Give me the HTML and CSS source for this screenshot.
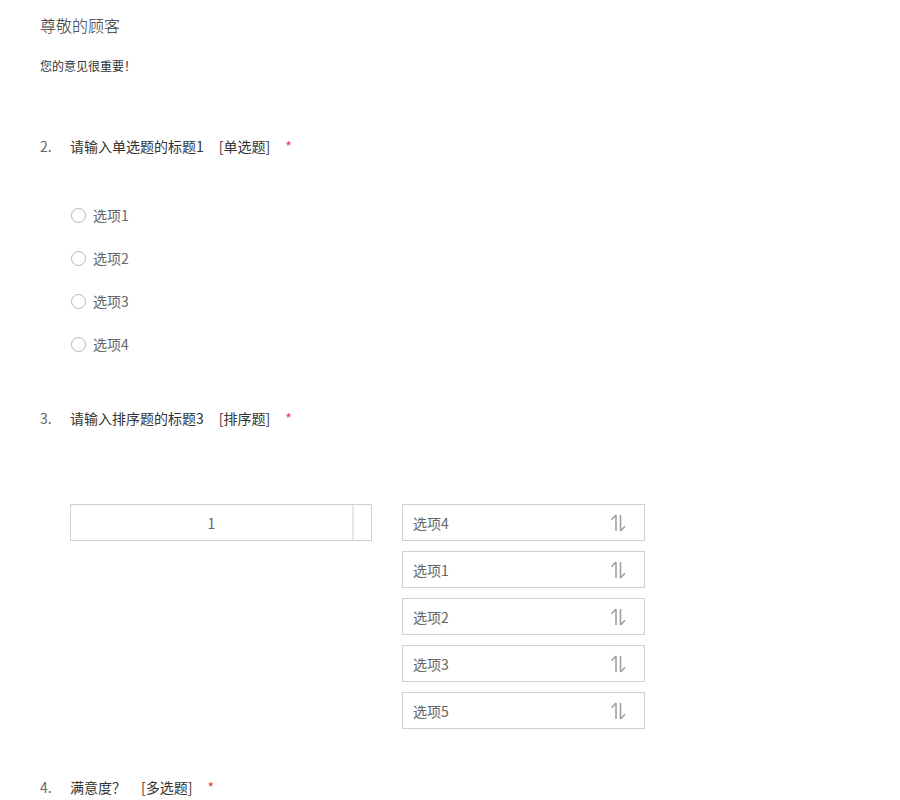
FILE: index.html
```html
<!DOCTYPE html>
<html lang="zh-CN">
<head>
<meta charset="utf-8">
<title>问卷</title>
<link rel="stylesheet" href="styles.css">
</head>
<body>
<div class="page">
  <header class="intro">
    <h1 class="title">尊敬的顾客</h1>
    <p class="subtitle">您的意见很重要！</p>
  </header>

  <section class="question q-single">
    <div class="q-head">
      <span class="q-num">2.</span>
      <span class="q-text">请输入单选题的标题1</span>
      <span class="q-type">[单选题]</span>
      <span class="q-req">*</span>
    </div>
    <ul class="options">
      <li class="option"><span class="radio"></span><span class="opt-label">选项1</span></li>
      <li class="option"><span class="radio"></span><span class="opt-label">选项2</span></li>
      <li class="option"><span class="radio"></span><span class="opt-label">选项3</span></li>
      <li class="option"><span class="radio"></span><span class="opt-label">选项4</span></li>
    </ul>
  </section>

  <section class="question q-sort">
    <div class="q-head">
      <span class="q-num">3.</span>
      <span class="q-text">请输入排序题的标题3</span>
      <span class="q-type">[排序题]</span>
      <span class="q-req">*</span>
    </div>
    <div class="sort-area">
      <div class="rank-box">
        <div class="rank-cell">1</div>
        <div class="rank-side"></div>
      </div>
      <ul class="sort-list">
        <li class="sort-item"><span class="sort-label">选项4</span><svg class="sort-icon" viewBox="0 0 17 18" width="17" height="18"><path d="M6 1V17M6 1L1.5 5.8M10.5 1V17M10.5 17L15 12.2" fill="none" stroke="#a0a0a0" stroke-width="1.6"/></svg></li>
        <li class="sort-item"><span class="sort-label">选项1</span><svg class="sort-icon" viewBox="0 0 17 18" width="17" height="18"><path d="M6 1V17M6 1L1.5 5.8M10.5 1V17M10.5 17L15 12.2" fill="none" stroke="#a0a0a0" stroke-width="1.6"/></svg></li>
        <li class="sort-item"><span class="sort-label">选项2</span><svg class="sort-icon" viewBox="0 0 17 18" width="17" height="18"><path d="M6 1V17M6 1L1.5 5.8M10.5 1V17M10.5 17L15 12.2" fill="none" stroke="#a0a0a0" stroke-width="1.6"/></svg></li>
        <li class="sort-item"><span class="sort-label">选项3</span><svg class="sort-icon" viewBox="0 0 17 18" width="17" height="18"><path d="M6 1V17M6 1L1.5 5.8M10.5 1V17M10.5 17L15 12.2" fill="none" stroke="#a0a0a0" stroke-width="1.6"/></svg></li>
        <li class="sort-item"><span class="sort-label">选项5</span><svg class="sort-icon" viewBox="0 0 17 18" width="17" height="18"><path d="M6 1V17M6 1L1.5 5.8M10.5 1V17M10.5 17L15 12.2" fill="none" stroke="#a0a0a0" stroke-width="1.6"/></svg></li>
      </ul>
    </div>
  </section>

  <section class="question q-multi">
    <div class="q-head">
      <span class="q-num">4.</span>
      <span class="q-text">满意度？</span>
      <span class="q-type">[多选题]</span>
      <span class="q-req">*</span>
    </div>
  </section>
</div>
</body>
</html>
```

FILE: styles.css
```css
html, body {
  margin: 0;
  padding: 0;
  background: #fff;
}
body {
  font-family: "Noto Sans CJK SC", "Microsoft YaHei", sans-serif;
  color: #333;
}
.page {
  padding: 13px 40px 0 40px;
}
.title {
  margin: 0;
  font-size: 16px;
  line-height: 24px;
  font-weight: 300;
  color: #333;
}
.subtitle {
  margin: 19px 0 0 0;
  font-size: 12px;
  line-height: 20px;
  color: #333;
}
.question {
  margin: 0;
}
.q-single {
  margin-top: 60px;
}
.q-sort {
  margin-top: 54px;
}
.q-multi {
  margin-top: 48px;
}
.q-head {
  display: flex;
  align-items: center;
  font-size: 14px;
  line-height: 20px;
  height: 20px;
}
.q-num {
  width: 30px;
  color: #666;
}
.q-text {
  color: #333;
}
.q-type {
  margin-left: 15px;
  color: #333;
}
.q-req {
  margin-left: 15px;
  color: #f04040;
}
.options {
  list-style: none;
  margin: 49px 0 0 30px;
  padding: 0;
  display: flex;
  flex-direction: column;
  gap: 23px;
}
.option {
  display: flex;
  align-items: center;
  height: 20px;
  font-size: 14px;
  color: #666;
}
.radio {
  width: 13px;
  height: 13px;
  border: 1px solid #b5b5b5;
  border-radius: 50%;
  margin-left: 1px;
  margin-right: 7px;
  box-sizing: content-box;
}
.sort-area {
  margin: 76px 0 0 30px;
  display: flex;
  align-items: flex-start;
  gap: 30px;
}
.rank-box {
  width: 300px;
  height: 35px;
  border: 1px solid #d0d0d0;
  display: flex;
}
.rank-cell {
  flex: 1;
  display: flex;
  align-items: center;
  justify-content: center;
  font-size: 14px;
  color: #666;
  border-right: 2px solid #e6e6e6;
}
.rank-side {
  width: 17px;
}
.sort-list {
  list-style: none;
  margin: 0;
  padding: 0;
  display: flex;
  flex-direction: column;
  gap: 10px;
}
.sort-item {
  height: 35px;
  border: 1px solid #d0d0d0;
  display: flex;
  align-items: center;
  justify-content: space-between;
  padding: 0 17px 0 10px;
  box-sizing: content-box;
  width: 214px;
  font-size: 14px;
  color: #666;
}
.sort-icon {
  display: block;
}
```
